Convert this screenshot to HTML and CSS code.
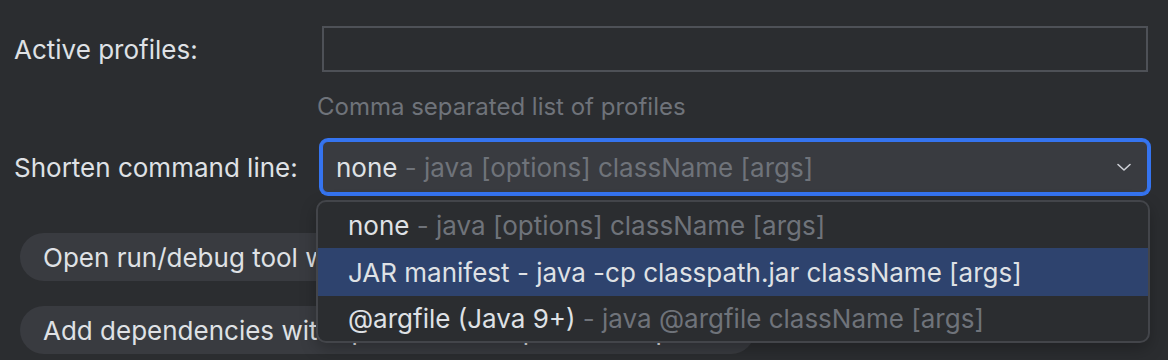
FILE: index.html
```html
<!DOCTYPE html>
<html lang="en">
<head>
    <meta charset="UTF-8">
    <title>Run configuration</title>
    <link rel="stylesheet" href="styles.css">
</head>
<body>
    <div class="settings">
        <!-- active profiles -->
        <div class="row row-profiles">
            <label class="row-label" for="profiles">Active profiles:</label>
            <input class="text-field" id="profiles" type="text">
        </div>
        <p class="hint">Comma separated list of profiles</p>

        <!-- shorten command line -->
        <div class="row row-shorten">
            <label class="row-label">Shorten command line:</label>
            <div class="combo-wrap">
                <div class="combo">
                    <span class="combo-text"><span class="main">none</span><span class="muted"> - java [options] className [args]</span></span>
                    <svg class="chevron" width="18" height="18" viewBox="0 0 18 18">
                        <path d="M3 6.5 L9 12 L15 6.5" fill="none" stroke="#ced0d6" stroke-width="1.6" stroke-linecap="round" stroke-linejoin="round"/>
                    </svg>
                </div>
                <ul class="popup">
                    <li class="option"><span class="main">none</span><span class="muted"> - java [options] className [args]</span></li>
                    <li class="option selected"><span class="main">JAR manifest - java -cp classpath.jar className [args]</span></li>
                    <li class="option"><span class="main">@argfile (Java 9+)</span><span class="muted"> - java @argfile className [args]</span></li>
                </ul>
            </div>
        </div>

        <!-- options -->
        <div class="chips">
            <span class="chip">Open run/debug tool window when started</span>
            <span class="chip chip-wide">Add dependencies with &ldquo;provided&rdquo; scope to classpath</span>
        </div>
    </div>
</body>
</html>
```

FILE: styles.css
```css
html, body {
    margin: 0;
    height: 100%;
    overflow: hidden;
}

body {
    background: #2b2d30;
    color: #dfe1e5;
    font-family: Inter, "Noto Sans", sans-serif;
    font-size: 26px;
}

.settings {
    padding: 26px 0 0 14px;
}

.row {
    display: flex;
    align-items: center;
}

.row-label {
    width: 308px;
    flex: none;
}

.text-field {
    width: 826px;
    height: 46px;
    box-sizing: border-box;
    margin: 0;
    background: transparent;
    border: 2px solid #4e5157;
    border-radius: 0;
    outline: none;
    color: #dfe1e5;
    font: inherit;
}

.hint {
    margin: 21px 0 0 303px;
    color: #6f737a;
    font-size: 24px;
    line-height: 28px;
}

.row-shorten {
    margin-top: 20px;
}

.combo-wrap {
    position: relative;
}

.combo {
    width: 826px;
    height: 52px;
    box-sizing: border-box;
    display: flex;
    align-items: center;
    justify-content: space-between;
    padding: 0 14px 0 13px;
    background: #393b40;
    border: 1px solid #3574f0;
    border-radius: 6px;
    box-shadow: 0 0 0 3px #3574f0;
}

.main {
    color: #dfe1e5;
}

.muted {
    color: #6f737a;
}

.popup {
    position: absolute;
    top: 59px;
    left: -6px;
    width: 834px;
    box-sizing: border-box;
    margin: 0;
    padding: 0;
    list-style: none;
    background: #2b2d30;
    border: 2px solid #43454a;
    border-radius: 10px;
    overflow: hidden;
    box-shadow: 0 6px 16px rgba(0, 0, 0, 0.25);
}

.option {
    height: 48px;
    display: flex;
    align-items: center;
    padding-left: 30px;
    white-space: pre;
}

.option:first-child {
    height: 46px;
}

.option:last-child {
    height: 45px;
}

.option.selected {
    background: #2e436e;
}

.chips {
    display: flex;
    flex-direction: column;
    align-items: flex-start;
    gap: 25px;
    margin: 40px 0 0 6px;
}

.chip {
    box-sizing: border-box;
    height: 48px;
    display: flex;
    align-items: center;
    padding: 0 23px;
    background: #393b40;
    border-radius: 24px;
    white-space: nowrap;
}

.chip-wide {
    width: 735px;
}
```
